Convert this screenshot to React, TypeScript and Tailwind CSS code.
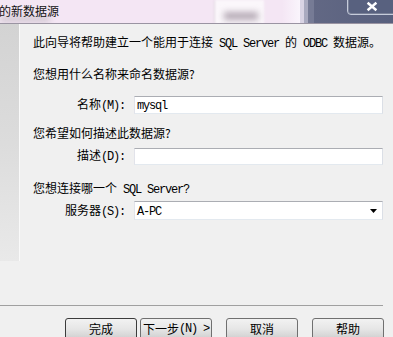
import React from "react";

const cjk = "font-['Noto_Sans_CJK_SC',sans-serif]";

function L({ children }: { children: React.ReactNode }) {
  return (
    <span className="font-['Liberation_Mono','Noto_Sans_CJK_SC',monospace] tracking-[-1.2px]">
      {children}
    </span>
  );
}

function Field({
  label,
  value,
  combo,
  height,
}: {
  label: React.ReactNode;
  value?: string;
  combo?: boolean;
  height: number;
}) {
  return (
    <div className="flex items-center">
      <div className="w-[92px] text-right leading-[16px] whitespace-nowrap">{label}</div>
      <div
        className={`ml-[9px] w-[249px] bg-white border border-t-[#abadb3] border-l-[#e2e3ea] border-r-[#dbdfe6] border-b-[#e3e9ef] flex items-center pl-[2px] pr-[5px] ${
          height === 18 ? "h-[18px]" : height === 17 ? "h-[17px]" : "h-[19px]"
        }`}
      >
        <span className="flex-1 leading-[14px]">
          {value ? <L>{value}</L> : null}
        </span>
        {combo ? (
          <svg width="7" height="4" viewBox="0 0 7 4" className="mt-[1px]">
            <polygon points="0,0 7,0 3.5,4" fill="#000" />
          </svg>
        ) : null}
      </div>
    </div>
  );
}

function Btn({ children, className = "" }: { children: React.ReactNode; className?: string }) {
  return (
    <div
      className={`w-[72px] h-[22px] rounded-[3px] border bg-[#e4e4e4] bg-linear-to-b from-[#f2f2f2] via-[#e6e6e6] to-[#cfcfcf] flex items-center justify-center leading-[16px] text-black ${className}`}
    >
      {children}
    </div>
  );
}

export default function App() {
  return (
    <div className={`relative w-[393px] h-[337px] overflow-hidden bg-[#f0f0f0] text-[12px] text-black ${cjk}`}>
      {/* title bar */}
      <div className="relative h-[24px] border-b border-[#9a94a2] overflow-hidden">
        <div className="flex h-full">
          <div className="w-[282px] h-full bg-[#f4e6f4]" />
          <div className="w-[18px] h-full bg-[#f7eef8] bg-linear-to-r from-[#f4e6f4] to-[#faf5fc]" />
          <div className="w-[4px] h-full bg-[#d9d4e4]" />
          <div className="w-[4px] h-full bg-[#a9aabf]" />
          <div className="w-[6px] h-full bg-[#767b95]" />
          <div className="flex-1 h-full bg-[#5d6481] bg-linear-to-r from-[#626884] to-[#58607e]" />
        </div>
        <div className="absolute left-[0px] top-[16px] w-[50px] h-[6px] bg-[#cfc6cf] blur-[3px]" />
        <div className="absolute left-[214px] top-[0px] w-[50px] h-[24px] bg-[#fbf7fb] border-l border-[#e0d6e0] blur-[1px]" />
        <div className="absolute left-[224px] top-[12px] w-[34px] h-[8px] bg-[#b5aab5] blur-[3px]" />
        <div className="absolute left-0 top-[3px] -ml-[1px] leading-[16px] text-[12px] text-[#111]">的新数据源</div>
        <svg
          width="46"
          height="16"
          viewBox="0 0 46 16"
          className="absolute left-[347px] top-0"
        >
          <path d="M0.5 -2 V11 Q0.5 14.5 4 14.5 H46 V-2 Z" fill="#58617f" />
          <path d="M1.5 -2 V11 Q1.5 13.5 4 13.5 H46" fill="none" stroke="#7a8198" strokeWidth="1" />
          <path d="M0.5 -2 V11 Q0.5 14.5 4 14.5 H46" fill="none" stroke="#c6ccdb" strokeWidth="1" />
          <path d="M21.5 3.5 L28.5 9.5 M28.5 3.5 L21.5 9.5" stroke="#ffffff" strokeWidth="2.4" strokeLinecap="square" />
        </svg>
      </div>

      {/* middle */}
      <div className="flex h-[281px]">
        <div className="w-[20px] h-[237px] border-r border-[#fafafa] bg-[#dcdcdc] bg-linear-to-b from-[#d3d3d3] via-[#dcdcdc] to-[#e9e9e9]" />
        <div className="ml-[13px] flex flex-col">
          <div className="mt-[10px] leading-[16px] whitespace-nowrap">
            此向导将帮助建立一个能用于连接<L> SQL Server </L>的<L> ODBC </L>数据源。
          </div>
          <div className="mt-[14px] leading-[16px]">您想用什么名称来命名数据源?</div>
          <div className="mt-[14px]">
            <Field
              height={18}
              label={
                <>
                  名称<L>(M):</L>
                </>
              }
              value="mysql"
            />
          </div>
          <div className="mt-[11px] leading-[16px]">您希望如何描述此数据源?</div>
          <div className="mt-[6px]">
            <Field
              height={17}
              label={
                <>
                  描述<L>(D):</L>
                </>
              }
            />
          </div>
          <div className="mt-[15px] leading-[16px] whitespace-nowrap">
            您想连接哪一个<L> SQL Server?</L>
          </div>
          <div className="mt-[3px]">
            <Field
              height={19}
              combo
              label={
                <>
                  服务器<L>(S):</L>
                </>
              }
              value="A-PC"
            />
          </div>
        </div>
      </div>

      {/* separator */}
      <div className="w-[383px] h-[1px] bg-[#a0a0a0]" />

      {/* buttons */}
      <div className="flex mt-[12px] ml-[65px]">
        <Btn className="border-[#3c3c3c]">完成</Btn>
        <Btn className="ml-[3px] border-[#707070]">
          下一步<L>(N) &gt;</L>
        </Btn>
        <Btn className="ml-[14px] border-[#707070]">取消</Btn>
        <Btn className="ml-[14px] border-[#707070]">帮助</Btn>
      </div>
    </div>
  );
}
